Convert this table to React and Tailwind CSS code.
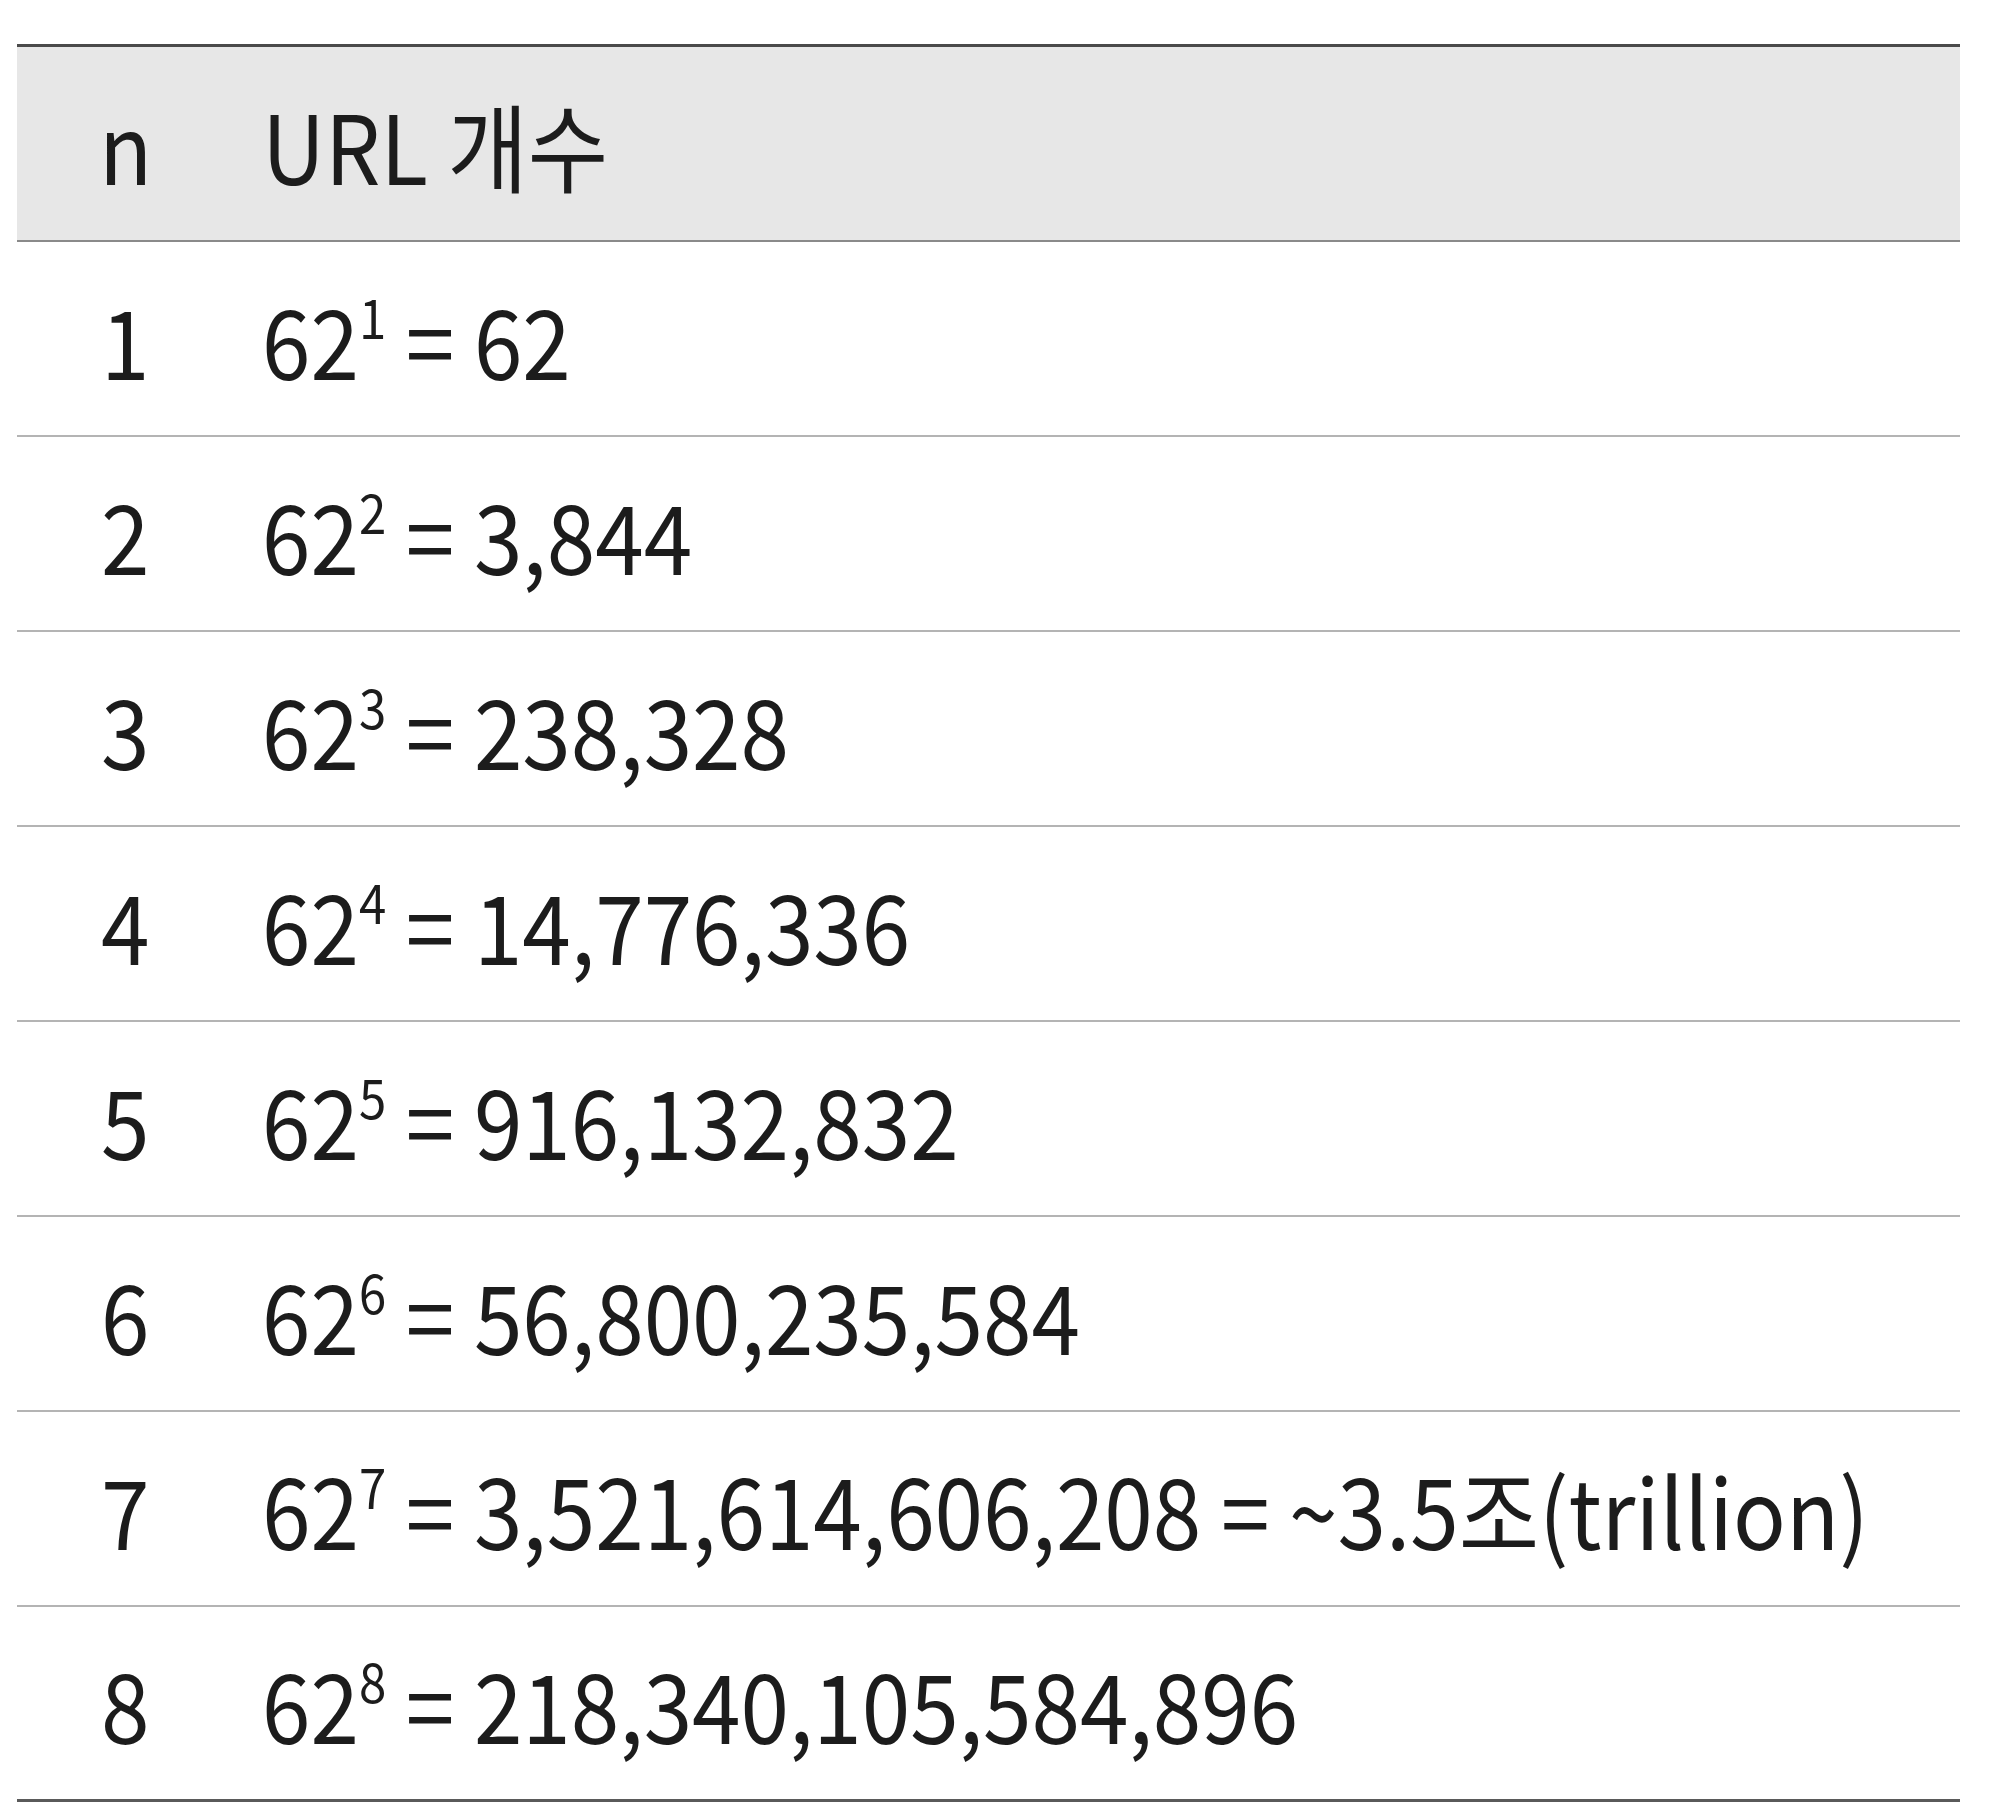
const rows = [
  { n: "1", exp: "1", value: "62" },
  { n: "2", exp: "2", value: "3,844" },
  { n: "3", exp: "3", value: "238,328" },
  { n: "4", exp: "4", value: "14,776,336" },
  { n: "5", exp: "5", value: "916,132,832" },
  { n: "6", exp: "6", value: "56,800,235,584" },
  { n: "7", exp: "7", value: "3,521,614,606,208 = ~3.5조(trillion)" },
  { n: "8", exp: "8", value: "218,340,105,584,896" },
];

// the scanned type is a little narrower than the font, so squeeze it
function Narrow({ children }) {
  return (
    <span className="inline-block origin-left scale-x-[0.91] whitespace-nowrap">
      {children}
    </span>
  );
}

function Power({ exp, value }) {
  return (
    <Narrow>
      62
      <sup className="relative top-[-2px] align-top text-[54px] leading-none">
        {exp}
      </sup>
      {" = "}
      {value}
    </Narrow>
  );
}

export default function App() {
  return (
    <div className="min-h-[1813px] w-[2000px] bg-white pt-[44px] font-['Noto_Sans_CJK_KR','Noto_Sans',sans-serif] text-[96px] leading-none text-[#1c1c1c]">
      <div className="ml-[17px] w-[1943px]">
        {/* Header */}
        <div className="flex h-[198px] items-center border-t-[3px] border-b-2 border-t-[#4a4a4a] border-b-[#8a8a8a] bg-[#e7e7e7]">
          <div className="w-[245px] shrink-0 pl-[82px]">
            <Narrow>n</Narrow>
          </div>
          <Narrow>URL 개수</Narrow>
        </div>

        {rows.map((row, i) => (
          <div
            key={row.n}
            className={`flex h-[195px] items-center ${
              i === rows.length - 1
                ? "border-b-[3px] border-[#5a5a5a]"
                : "border-b-2 border-[#b4b4b4]"
            }`}
          >
            <div className="w-[245px] shrink-0 pl-[84px]">
              <Narrow>{row.n}</Narrow>
            </div>
            <Power exp={row.exp} value={row.value} />
          </div>
        ))}
      </div>
    </div>
  );
}
